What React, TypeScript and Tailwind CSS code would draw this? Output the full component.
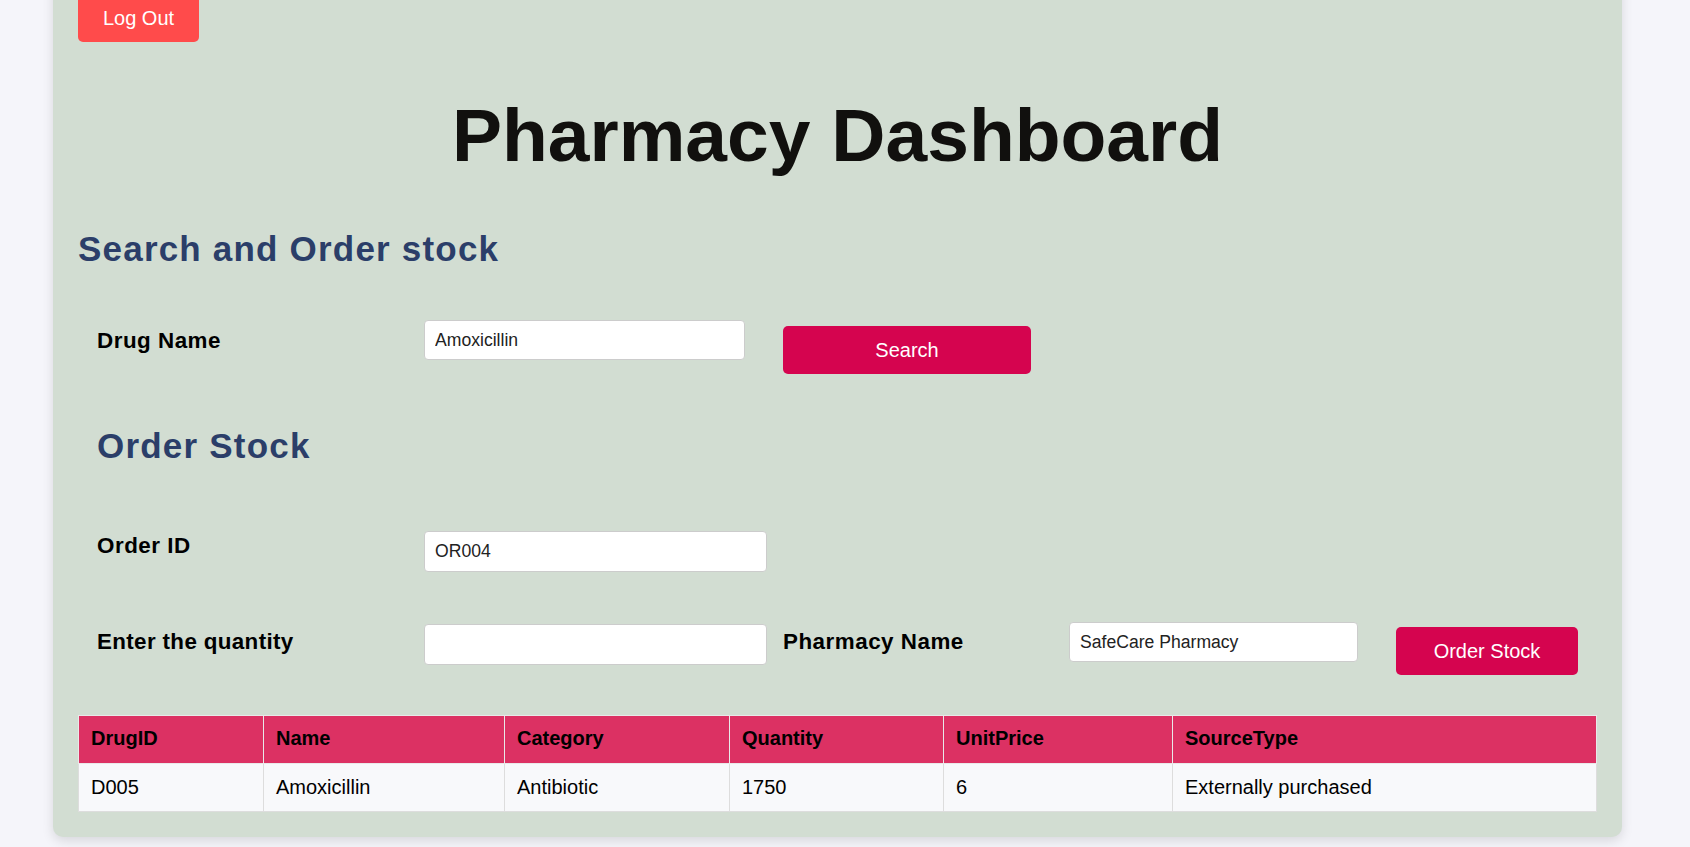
import React from "react";

const font = { fontFamily: '"Liberation Sans", Arial, Helvetica, sans-serif' };

export default function App() {
  const labelCls =
    "text-[22.4px] leading-none font-bold tracking-[0.5px] text-black shrink-0";
  const inputCls =
    "bg-white border border-[#cccccc] rounded-[4px] px-[10px] text-[17.6px] text-[#222] outline-none shrink-0";
  const btnCls =
    "bg-[#d5044f] text-white text-[20px] rounded-[5px] shrink-0 flex items-center justify-center";
  const headers = ["DrugID", "Name", "Category", "Quantity", "UnitPrice", "SourceType"];
  const row = ["D005", "Amoxicillin", "Antibiotic", "1750", "6", "Externally purchased"];
  const widths = [185, 241, 225, 214, 229];

  return (
    <div className="h-[847px] overflow-hidden bg-[#f5f5fa]" style={font}>
      <div className="ml-[53px] w-[1569px] -mt-[20px] pt-[14px] px-[25px] pb-[25px] bg-[#d2ddd2] rounded-[10px] shadow-[0_4px_12px_rgba(0,0,0,0.12)]">
        <button className="h-[48px] w-[121px] bg-[#ff4b4b] text-white text-[20px] rounded-[5px] flex items-center justify-center">
          Log Out
        </button>

        <h1 className="mt-[56px] text-[75px] leading-none font-bold text-center text-[#11100e]">
          Pharmacy Dashboard
        </h1>

        <h2 className="mt-[58px] text-[35px] leading-none font-bold tracking-[1.2px] text-[#2b3e69]">
          Search and Order stock
        </h2>

        <div className="pl-[19px]">
          <div className="mt-[54px] flex items-start">
            <div className={`${labelCls} w-[327px] mt-[10px]`}>Drug Name</div>
            <input className={`${inputCls} w-[321px] h-[40px]`} defaultValue="Amoxicillin" />
            <button className={`${btnCls} ml-[38px] mt-[6px] w-[248px] h-[48px]`}>Search</button>
          </div>

          <h2 className="mt-[54px] text-[35px] leading-none font-bold tracking-[1.2px] text-[#2b3e69]">
            Order Stock
          </h2>

          <div className="mt-[68px] flex items-start">
            <div className={`${labelCls} w-[327px] mt-[4px]`}>Order ID</div>
            <input className={`${inputCls} w-[343px] h-[41px]`} defaultValue="OR004" />
          </div>

          <div className="mt-[50px] flex items-start">
            <div className={`${labelCls} w-[327px] mt-[9px] tracking-[0.35px]`}>Enter the quantity</div>
            <input className={`${inputCls} w-[343px] h-[41px] mt-[2px]`} defaultValue="" />
            <div className={`${labelCls} ml-[16px] w-[286px] mt-[9px]`}>Pharmacy Name</div>
            <input className={`${inputCls} w-[289px] h-[40px]`} defaultValue="SafeCare Pharmacy" />
            <button className={`${btnCls} ml-[38px] mt-[5px] w-[182px] h-[48px]`}>Order Stock</button>
          </div>
        </div>

        <table className="mt-[40px] w-full table-fixed border-collapse text-[20px] text-black">
          <colgroup>
            {widths.map((w, i) => (
              <col key={i} style={{ width: w }} />
            ))}
            <col />
          </colgroup>
          <thead>
            <tr className="bg-[#dc3163]">
              {headers.map((h) => (
                <th
                  key={h}
                  className="border border-[#e9e9e9] px-[12px] pt-[11px] pb-[13px] leading-[23px] text-left font-bold"
                >
                  {h}
                </th>
              ))}
            </tr>
          </thead>
          <tbody>
            <tr className="bg-[#f8f9fb]">
              {row.map((c, i) => (
                <td
                  key={i}
                  className="border border-[#dddddd] px-[12px] py-[12px] leading-[23px] text-left"
                >
                  {c}
                </td>
              ))}
            </tr>
          </tbody>
        </table>
      </div>
    </div>
  );
}
